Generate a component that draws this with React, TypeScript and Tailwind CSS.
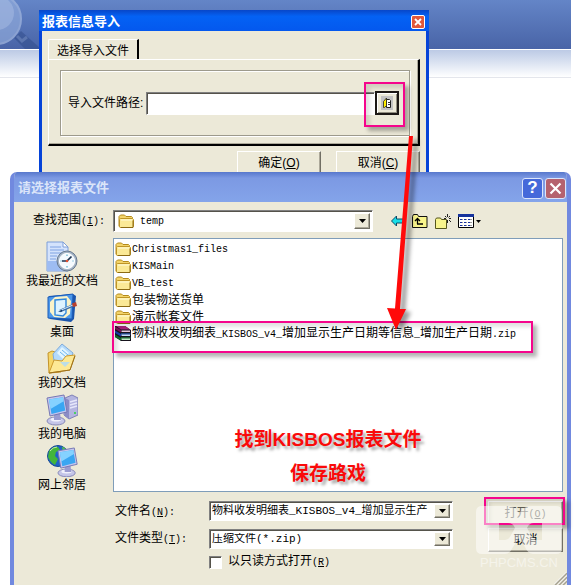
import type { ReactNode } from 'react';

const cjk = "font-['Liberation_Sans','Noto_Sans_CJK_SC',sans-serif]";
const field = "font-['Liberation_Mono','Noto_Sans_CJK_SC',monospace]";
const sunken = 'border border-t-[#808080] border-l-[#808080] border-r-white border-b-white bg-white shadow-[inset_1px_1px_0_#55534b]';
const raised = 'border border-t-white border-l-white border-r-[#716f64] border-b-[#716f64] bg-[#ece9d8] shadow-[inset_-1px_-1px_0_#aca899]';

const files = [
  ['Christmas1_files', 'folder'],
  ['KISMain', 'folder'],
  ['VB_test', 'folder'],
  ['包装物送货单', 'folder'],
  ['演示帐套文件', 'folder'],
  ['物料收发明细表_KISBOS_v4_增加显示生产日期等信息_增加生产日期.zip', 'zip']
];

const places: [string, () => ReactNode][] = [
  ['我最近的文档', RecentIcon],
  ['桌面', DesktopIcon],
  ['我的文档', DocumentsIcon],
  ['我的电脑', ComputerIcon],
  ['网上邻居', NetworkIcon]
];

function Latin({ children }: { children: ReactNode }) {
  return <span className="font-['Liberation_Mono',monospace] text-[10px]">{children}</span>;
}

// latin runs are half the width of a hanzi
function Mixed({ text }: { text: string }) {
  return <>{text.split(/([\x21-\x7e]+)/).map((part, i) => (i % 2 ? <Latin key={i}>{part}</Latin> : part))}</>;
}

function FolderIcon() {
  return (
    <svg width="16" height="16" viewBox="0 0 16 16" className="shrink-0">
      <path d="M1 13V3.5L2.5 2h4L8 3.5h5.5l1 1V13l-1 1.5H2z" fill="#f3d46a" stroke="#b48a1c" />
      <path d="M1.5 13.5V6.5l1-1h12l1 1v7l-1 1h-12z" fill="#fbe996" stroke="#bf9526" />
      <path d="M3 7h11" stroke="#fffbdc" />
      <path d="M3 14.5h12v-7" fill="none" stroke="#8c6a13" />
    </svg>
  );
}

function ZipIcon() {
  return (
    <svg width="16" height="17" viewBox="0 0 16 17" className="shrink-0">
      <path d="M0 1h10l6 4v11H6l-6-4z" fill="#16121c" />
      <path d="M1 1h9l5 3.500H6z" fill="#a8247c" />
      <path d="M0 1.500L6 5v2.500L0 4z" fill="#7c1058" />
      <path d="M6.500 5.500H15v1.500H6.500z" fill="#e8c8e0" />
      <path d="M0 5.500L6 9v2.500L0 8z" fill="#1840b0" />
      <path d="M6 8.500h9.500v1H6z" fill="#2f74e8" />
      <path d="M6.500 9.500H15V11H6.500z" fill="#c4dcfa" />
      <path d="M0 9.500L6 13v2.500L0 12z" fill="#0c6c2c" />
      <path d="M6 12.500h9.500v1H6z" fill="#24ac48" />
      <path d="M6.500 13.500H15V15H6.500z" fill="#c2ecca" />
    </svg>
  );
}

function RecentIcon() {
  return (
    <svg width="32" height="32" viewBox="0 0 32 32">
      <path d="M1 1h16l5 5v24H1z" fill="#d4e3fc" stroke="#7c9ed8" />
      <path d="M1 20h15v10H1z" fill="#9dbcf2" />
      <path d="M17 1v5h5z" fill="#fff" stroke="#7c9ed8" />
      <path d="M4 6h11M4 9h14M4 12h12M4 15h7M4 18h6" stroke="#7fa2e2" />
      <circle cx="21" cy="20" r="10" fill="#a4b4c6" stroke="#67788e" />
      <circle cx="21" cy="20" r="7.6" fill="#f4faff" stroke="#fff" />
      <path d="M21 20l4.500-4.500M21 20h-5" stroke="#1c3350" strokeWidth="1.700" />
      <path d="M21 13.500v1.500M21 25v1.500M14.500 20h1M26.500 20h1" stroke="#40a0c0" />
      <circle cx="21" cy="20" r="1.300" fill="#e05030" />
    </svg>
  );
}

function DesktopIcon() {
  return (
    <svg width="32" height="32" viewBox="0 0 32 32">
      <path d="M3 4l24-2 3 2-2 23-3 3-21-3-2-2z" fill="#1a55ad" />
      <path d="M2 5l25-3-1 25L2 26z" fill="#4b97ea" stroke="#1c5cb8" />
      <path d="M9 5l12-1 4 5-1 13-5 4-11-1-4-5V10z" fill="#fbf3c8" />
      <path d="M9 8l11-1v14l-3 3-8-1z" fill="#def3ff" stroke="#2f87dc" strokeWidth="1.400" />
      <path d="M14 19l14-6" stroke="#3c6ea8" strokeWidth="2.600" />
      <path d="M14 18.500l13-5.500" stroke="#cfe6fa" />
      <path d="M26 11.500l4-1.500 1 4-4 1z" fill="#b8402c" />
      <path d="M12 20l4-2.500v2z" fill="#123d70" />
    </svg>
  );
}

function DocumentsIcon() {
  return (
    <svg width="32" height="32" viewBox="0 0 32 32">
      <path d="M2 10l4-2 6 2 3 1v18L3 30z" fill="#f6d668" stroke="#c3932a" />
      <path d="M7 11l9-10 11 9-5 16-13-1z" fill="#b4dafb" stroke="#7fabdb" />
      <path d="M11 10l5-6 7 6-6 6z" fill="#e2f5ff" />
      <path d="M14 9l6 5M16 7l6 5" stroke="#6db5ee" />
      <path d="M3 30L8 17l8 1 4-5 9-1-5 15z" fill="#fde995" stroke="#cd9a2c" />
      <path d="M14 19h10l-5 5z" fill="#b4dcef" opacity=".9" />
      <path d="M3 30l21-3 5-14" fill="none" stroke="#9c701b" />
    </svg>
  );
}

function Monitor() {
  return (
    <>
      <ellipse cx="10" cy="27" rx="9" ry="4" fill="#c4c5e8" stroke="#8788b8" />
      <ellipse cx="10" cy="25.500" rx="5.500" ry="2" fill="#f0f0fc" />
      <path d="M8 19h6l1 7H8z" fill="#9a9bd0" />
      <path d="M1 4l17-3 3 17-17 4z" fill="#c5c6ee" stroke="#7678b4" />
      <path d="M3 5.500l14-2.300 2.300 13.300L5.500 20z" fill="#39a6f2" />
      <path d="M3 5.500l14-2.300.7 4L4.500 15z" fill="#85d2ff" />
    </>
  );
}

function ComputerIcon() {
  return (
    <svg width="32" height="32" viewBox="0 0 32 32">
      <path d="M19 4l7-3 6 3v17l-9 4-5-4z" fill="#b4b5e0" stroke="#7f80b6" />
      <path d="M19 4l4 2v19l-4-3z" fill="#8b8cc6" />
      <path d="M24 8l7-2M24 11l7-2M24 14l7-2" stroke="#e6e7fb" strokeWidth="1.400" />
      <path d="M28 19h2" stroke="#48d060" strokeWidth="2" />
      <Monitor />
    </svg>
  );
}

function NetworkIcon() {
  return (
    <svg width="32" height="32" viewBox="0 0 32 32">
      <circle cx="12" cy="11" r="10.500" fill="#1e61c8" stroke="#174b94" />
      <path d="M3 6q5-5 9-4l2 3-4 2-1 4 3 3-3 6q-5-3-7-8z" fill="#43b53b" />
      <path d="M16 1.500q5 2 6 7l-5-1z" fill="#55c24a" />
      <path d="M4 6q3-4 7-4" stroke="#c2f0a0" fill="none" />
      <g transform="translate(11 2) scale(.96)">
        <Monitor />
      </g>
    </svg>
  );
}

function Caret() {
  return (
    <svg width="7" height="4" viewBox="0 0 7 4">
      <path d="M0 0h7L3.500 4z" fill="#000" />
    </svg>
  );
}

const bevel = `flex w-4 items-center justify-center ${raised}`;

function TitleButton({ label, tone, children }: { label: string; tone: string; children: ReactNode }) {
  return (
    <button aria-label={label} className={`flex size-[21px] items-center justify-center rounded-[3px] border border-[#dbe5fb] ${tone}`}>
      {children}
    </button>
  );
}

function Toolbar() {
  return (
    <div className="flex items-center gap-[7px]">
      <button aria-label="后退" className="flex h-5 w-[14px] items-center">
        <svg width="14" height="12" viewBox="0 0 14 12">
          <path d="M.5 6L5.500 1v3H14v4H5.500v3z" fill="#18dfe8" stroke="#0a4a66" />
        </svg>
      </button>
      <button aria-label="向上一级" className="flex h-5 w-4 items-center">
        <svg width="16" height="14" viewBox="0 0 16 14">
          <path d="M.5 13.500V2.500l1-2h4l1 2h8.500v11z" fill="#f8f48c" stroke="#111" />
          <path d="M5.500 10V5M3 7l2.500-2.500L8 7M5 10h6" fill="none" stroke="#000" strokeWidth="1.300" />
        </svg>
      </button>
      <button aria-label="新建文件夹" className="flex h-5 w-4 items-center">
        <svg width="16" height="15" viewBox="0 0 16 15">
          <path d="M.5 14.500V5.500l1-1.500h4l1 1.500h5v9z" fill="#f8f48c" stroke="#55551c" />
          <path d="M12.500 0v3M12.500 6v3M9 4.500h2M14 4.500h2M10 2l1.500 1.500M15 2l-1.500 1.500M14 6l2 2" stroke="#222" />
        </svg>
      </button>
      <button aria-label="查看" className="flex h-5 items-center gap-0.5">
        <svg width="16" height="14" viewBox="0 0 16 14">
          <path d="M.5.500h15v13H.5z" fill="#fff" stroke="#000" />
          <path d="M0 0h16v3H0z" fill="#16339c" />
          <path d="M2 5.500h2M6 5.500h2M10 5.500h2M2 8.500h2M6 8.500h2M10 8.500h2M2 11.500h2M6 11.500h2M10 11.500h2" stroke="#1830a0" />
          <path d="M4 5.500h1M8 5.500h1M12 5.500h2M4 8.500h1M8 8.500h1M12 8.500h2M4 11.500h1M8 11.500h1M12 11.500h2" stroke="#999" />
        </svg>
        <svg width="5" height="3" viewBox="0 0 5 3">
          <path d="M0 0h5L2.500 3z" />
        </svg>
      </button>
    </div>
  );
}

function ImportDialog() {
  return (
    <section className="absolute top-[10px] left-[39px] w-[390px] border-x-[3px] border-[#0543d8] bg-[#ece9d8]">
      <header className="-mx-[3px] flex h-[21px] items-center justify-between bg-linear-to-b from-[#0846c8] via-[#0462f4] via-30% to-[#0458ee] pt-0.5 pr-1 pl-[3px]">
        <h1 className="text-[13px] leading-4 font-bold text-white">报表信息导入</h1>
        <button aria-label="关闭" className="flex size-[14px] items-center justify-center rounded-[2px] border border-white bg-[#e0583a]">
          <svg width="8" height="8" viewBox="0 0 8 8">
            <path d="M1 1l6 6M7 1L1 7" stroke="#fff" strokeWidth="1.800" />
          </svg>
        </button>
      </header>
      <div className="px-1.5 pt-2">
        <button className="-mb-px flex h-[21px] w-[91px] items-center justify-center rounded-tl-[2px] border-t border-r-2 border-l border-t-white border-r-black border-l-white bg-[#ece9d8] pt-0.5 text-xs">
          选择导入文件
        </button>
        <div className="border-t border-r-2 border-b-2 border-l border-t-white border-r-black border-b-black border-l-white pt-2.5 pr-2 pb-2 pl-[11px] shadow-[inset_-1px_-1px_0_#aca899]">
          <div className="flex h-[66px] items-center border border-[#9d9a8c] pr-2.5 pl-[7px] shadow-[inset_1px_1px_0_#fff,1px_1px_0_#fff]">
            <label htmlFor="path" className="w-[78px] text-xs">导入文件路径:</label>
            <input id="path" className={`h-[23px] min-w-0 flex-1 px-1 text-xs outline-none ${sunken}`} />
            <button aria-label="浏览" className="flex h-6 w-6 items-center justify-center border-2 border-[#1c1815] bg-[#ece9d8] shadow-[inset_1px_1px_0_#fff,inset_-1px_-1px_0_#918e80]">
              <svg width="12" height="14" viewBox="0 0 12 14">
                <path d="M0 0h12v14H0z" fill="#c3c3c3" />
                <path d="M5.500 3.500h3l1 1v7h-4z" fill="#fff" stroke="#222" />
                <path d="M2.500 5.500l3-3.500v7.500l-2 2h-1z" fill="#ffef00" stroke="#222" strokeWidth=".8" />
                <path d="M7 6.500h2M7 8.500h2" stroke="#333" />
              </svg>
            </button>
          </div>
        </div>
        <div className="flex h-7 items-start justify-end gap-[15px] pt-[5px]">
          <button className={`h-6 w-[84px] text-xs ${raised}`}>确定(<u>O</u>)</button>
          <button className={`h-6 w-[84px] text-xs ${raised}`}>取消(<u>C</u>)</button>
        </div>
      </div>
    </section>
  );
}

function FileList() {
  return (
    <div className="mt-1.5 h-[254px] border border-[#7f9db9] bg-white px-px pt-px">
      <ul>
        {files.map(([name, kind]) => (
          <li key={name} className="flex h-[17px] items-center gap-px text-xs whitespace-nowrap">
            {kind === 'zip' ? <ZipIcon /> : <FolderIcon />}
            <span className="leading-4"><Mixed text={name} /></span>
          </li>
        ))}
      </ul>
    </div>
  );
}

function FileDialog() {
  return (
    <section className="absolute top-[172px] right-[9px] bottom-px left-[10px] overflow-hidden rounded-t-[7px] border-x-4 border-[#7189df] bg-[#ece9d8]">
      <header className="-mx-1 flex h-[30px] items-center justify-between bg-linear-to-b from-[#5878cc] via-[#7c99e3] via-20% to-[#84a4ea] pt-0.5 pr-[5px] pl-2">
        <h2 className="text-[13px] leading-4 font-bold text-[#dbe5f9]">请选择报表文件</h2>
        <div className="flex gap-0.5">
          <TitleButton label="帮助" tone="bg-[#4569da] text-[17px] leading-4 font-bold text-white">?</TitleButton>
          <TitleButton label="关闭" tone="bg-[#b5626e]">
            <svg width="13" height="13" viewBox="0 0 13 13">
              <path d="M1.500 1.500l10 10M11.500 1.500l-10 10" stroke="#fff" strokeWidth="2.200" />
            </svg>
          </TitleButton>
        </div>
      </header>
      <div className="flex h-[30px] items-center pt-2 pl-[19px]">
        <label htmlFor="folder" className="w-20 text-xs leading-4">
          查找范围<Latin>(<u>I</u>):</Latin>
        </label>
        <div className={`relative flex h-[22px] w-[260px] items-center pl-1 ${sunken}`}>
          <FolderIcon />
          <select id="folder" className={`h-full flex-1 appearance-none pl-1.5 text-[10px] outline-none ${field}`}>
            <option>temp</option>
          </select>
          <span className={`pointer-events-none absolute inset-y-0.5 right-0.5 ${bevel}`}><Caret /></span>
        </div>
        <div className="ml-[18px]"><Toolbar /></div>
      </div>
      <div className="flex gap-[3px] pr-1">
        <nav className="flex w-24 shrink-0 flex-col pt-[9px]">
          {places.map(([label, Icon]) => (
            <button key={label} className="flex h-[51px] flex-col items-center text-xs leading-4">
              <Icon />
              {label}
            </button>
          ))}
        </nav>
        <div className="min-w-0 flex-1">
          <FileList />
          <div className="flex justify-between gap-[35px] pt-[9px]">
            <div className="min-w-0 flex-1 pl-0.5 text-xs leading-4">
              <div className="flex items-center">
                <label htmlFor="name" className="w-[94px] shrink-0 pt-0.5">文件名<Latin>(<u>N</u>):</Latin></label>
                <div className={`flex h-5 min-w-0 flex-1 p-0.5 ${sunken}`}>
                  <input id="name" defaultValue="物料收发明细表_KISBOS_v4_增加显示生产" className={`min-w-0 flex-1 text-[11px] outline-none ${field}`} />
                  <button aria-label="历史记录" className={bevel}><Caret /></button>
                </div>
              </div>
              <div className="mt-2 flex items-center">
                <label htmlFor="type" className="w-[94px] shrink-0">文件类型<Latin>(<u>T</u>):</Latin></label>
                <div className={`relative flex h-5 min-w-0 flex-1 p-0.5 ${sunken}`}>
                  <select id="type" className={`flex-1 appearance-none text-[11px] leading-3 outline-none ${field}`}>
                    <option>压缩文件(*.zip)</option>
                  </select>
                  <span className={`pointer-events-none absolute inset-y-0.5 right-0.5 ${bevel}`}><Caret /></span>
                </div>
              </div>
              <label className="mt-1 flex items-center gap-1.5 pl-[94px]">
                <input type="checkbox" className={`size-[13px] appearance-none ${sunken}`} />
                <span>以只读方式打开<Latin>(<u>R</u>)</Latin></span>
              </label>
            </div>
            <div className="flex w-[75px] flex-col gap-[3px] text-xs">
              <button className={`h-6 text-[#5c5b54] ${raised}`}>打开<Latin>(<u>O</u>)</Latin></button>
              <button className={`h-6 ${raised}`}>取消</button>
            </div>
          </div>
        </div>
      </div>
      <svg width="13" height="13" viewBox="0 0 13 13" className="absolute right-0 bottom-0">
        <path d="M1 13L13 1M5 13l8-8M9 13l4-4" stroke="#a8a493" strokeWidth="1.800" />
        <path d="M0 12.500L12.500 0M4 12.500L13 3.500M8 12.500l5-5" stroke="#fff" />
      </svg>
    </section>
  );
}

const frame = 'absolute border-2 border-[#f5058c] shadow-[4px_4px_4px_rgba(0,0,0,0.3),inset_4px_4px_4px_rgba(0,0,0,0.12)]';

function Annotations() {
  return (
    <div className="pointer-events-none absolute inset-0">
      <div className={`${frame} top-[82px] left-[364px] h-[45px] w-[41px]`} />
      <div className={`${frame} top-[321px] left-[112px] h-[32px] w-[421px]`} />
      <svg width="40" height="205" viewBox="0 0 40 205" className="absolute top-[133px] left-[382px] drop-shadow-[5px_3px_2px_rgba(0,0,0,0.4)]">
        <path d="M27 3h4l-13 173h6l-10 21-9-22 8 .5z" fill="#ff0a0a" />
      </svg>
      <div className="absolute top-[423px] left-[228px] w-[200px] text-center text-[19px] leading-[34px] font-bold text-[#fa0a0a] [text-shadow:3px_3px_3px_rgba(0,0,0,0.35)]">
        <p>找到KISBOS报表文件</p>
        <p>保存路戏</p>
      </div>
      <div className={`${frame} top-[497px] right-[15px] h-[28px] w-[81px]`} />
      <div className="absolute top-[506px] right-[18px] flex w-[86px] flex-col items-center text-white/50">
        <svg width="86" height="49" viewBox="0 0 86 49" fill="currentColor">
          <path d="M6 0h24q10 0 13 8 4-8 13-8h24q6 0 6 6v36q0 6-6 6H57q-5 0-8-7l-6-9-6 9q-3 7-8 7H6q-6 0-6-6V6q0-6 6-6zm17 17v17h6q4 0 6-5l4-7q-2-5-7-5zm28 5l4 7q2 5 7 5h4V17h-8q-5 0-7 5z" fillRule="evenodd" />
        </svg>
        <span className="text-[13px] leading-[15px]">PHPCMS.CN</span>
      </div>
    </div>
  );
}

export default function App() {
  return (
    <main className={`relative min-h-screen overflow-hidden bg-white text-black ${cjk}`}>
      <div className="mr-[9px]">
        <div className="h-[49px] bg-linear-to-b from-[#6485c7] to-[#4964a7]">
          <svg width="42" height="49" viewBox="0 0 42 49">
            <path d="M14 38l7-7 20 18H25z" fill="#324d8b" opacity=".55" />
            <path d="M17 36l5 5 5-4" fill="none" stroke="#8aa0d0" strokeWidth="3" opacity=".4" />
            <circle cx="-4" cy="19" r="25" fill="#8fa9da" stroke="#a5b9e0" strokeWidth="2" opacity=".7" />
            <circle cx="-3" cy="13" r="17" fill="#b4c6e8" opacity=".4" />
          </svg>
        </div>
        <div className="h-[29px] border-t border-b border-t-white border-b-[#e4e6ec] bg-linear-to-b from-[#bccae5] to-white" />
      </div>
      <ImportDialog />
      <FileDialog />
      <Annotations />
    </main>
  );
}
